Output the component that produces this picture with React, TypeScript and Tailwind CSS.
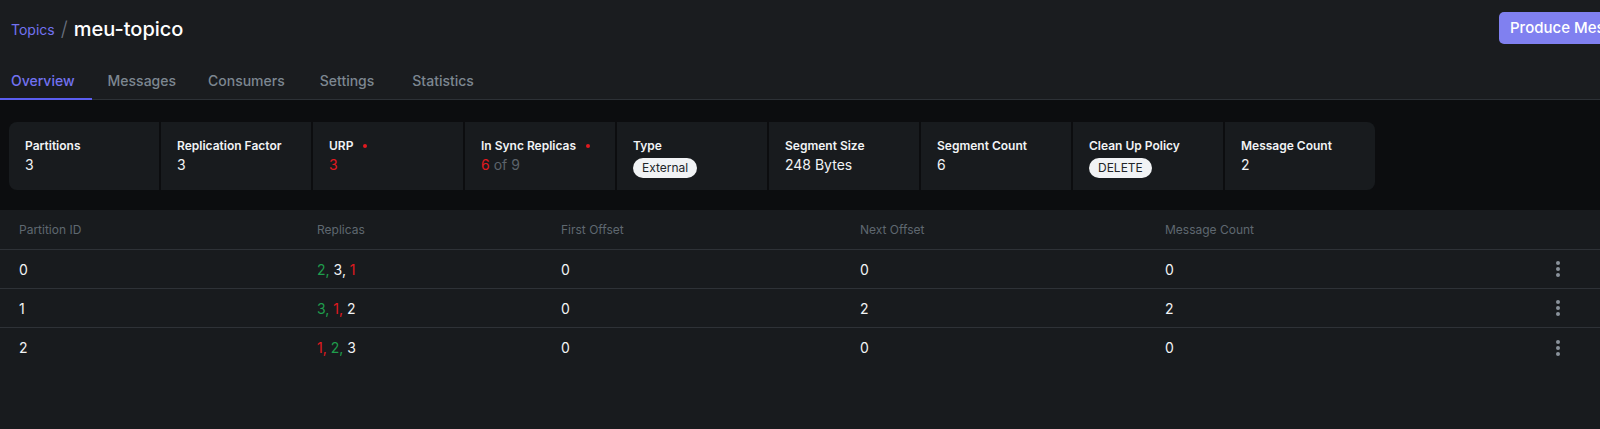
import { useState } from 'react';

type Replica = { id: number; tone: 'green' | 'red' | 'white' };

const stats = [
  { label: 'Partitions', value: '3' },
  { label: 'Replication Factor', value: '3' },
  { label: 'URP', value: '3', alert: true, red: true },
  { label: 'In Sync Replicas', value: 'isr', alert: true },
  { label: 'Type', badge: 'External' },
  { label: 'Segment Size', value: '248 Bytes' },
  { label: 'Segment Count', value: '6' },
  { label: 'Clean Up Policy', badge: 'DELETE' },
  { label: 'Message Count', value: '2' },
];

const rows: { id: string; replicas: Replica[]; first: string; next: string; count: string }[] = [
  {
    id: '0',
    replicas: [
      { id: 2, tone: 'green' },
      { id: 3, tone: 'white' },
      { id: 1, tone: 'red' },
    ],
    first: '0',
    next: '0',
    count: '0',
  },
  {
    id: '1',
    replicas: [
      { id: 3, tone: 'green' },
      { id: 1, tone: 'red' },
      { id: 2, tone: 'white' },
    ],
    first: '0',
    next: '2',
    count: '2',
  },
  {
    id: '2',
    replicas: [
      { id: 1, tone: 'red' },
      { id: 2, tone: 'green' },
      { id: 3, tone: 'white' },
    ],
    first: '0',
    next: '0',
    count: '0',
  },
];

const tabs = ['Overview', 'Messages', 'Consumers', 'Settings', 'Statistics'];

const tabSpacing = ['pl-[11px] pr-[17px]', 'px-4', 'px-4', 'ml-[3px] px-4', 'ml-[6px] px-4'];

const toneClass = {
  green: 'text-[#1f9d4c]',
  red: 'text-[#e0191f]',
  white: 'text-[#f1f3f5]',
};

function Kebab() {
  return (
    <svg width="6" height="18" viewBox="0 0 6 18" className="text-[#8a929b]">
      <circle cx="3" cy="3" r="2" fill="currentColor" />
      <circle cx="3" cy="9" r="2" fill="currentColor" />
      <circle cx="3" cy="15" r="2" fill="currentColor" />
    </svg>
  );
}

export default function App() {
  const [tab, setTab] = useState(0);

  return (
    <div className="h-[429px] w-full overflow-hidden bg-[#181b1e] font-['Inter',sans-serif] text-[#f1f3f5]">
      <header className="bg-[#1a1c1f]">
        <div className="flex h-[56px] items-center pl-[11px]">
          <div className="flex flex-1 items-center pt-[2px]">
            <span className="text-[14px] text-[#7272f0]">Topics</span>
            <span className="mx-[6px] text-[20px] font-light text-[#6b7280]">/</span>
            <h1 className="text-[20px] font-medium text-white">meu-topico</h1>
          </div>
          <button
            type="button"
            className="-mr-[44px] h-8 w-[145px] shrink-0 whitespace-nowrap rounded-[5px] bg-[#8080f0] pl-[11px] text-left text-[15px] font-medium text-white"
          >
            Produce Message
          </button>
        </div>
        <nav className="flex h-[44px] items-end border-b border-[#2d3136]">
          {tabs.map((t, i) => (
            <button
              key={t}
              type="button"
              onClick={() => setTab(i)}
              className={`-mb-px flex h-[40px] items-center border-b-2 pt-[2px] text-[14px] font-medium ${tabSpacing[i]} ${
                tab === i ? 'border-[#5b5ef0] text-[#7272f0]' : 'border-transparent text-[#7d8791]'
              }`}
            >
              {t}
            </button>
          ))}
        </nav>
      </header>

      <section className="bg-[#0c0d0f] px-[9px] pb-[20px] pt-[22px]">
        <div className="flex w-fit gap-[2px] overflow-hidden rounded-[8px]">
          {stats.map((s) => (
            <div key={s.label} className="h-[68px] w-[150px] bg-[#181b1e] px-4 pt-[16px]">
              <div className="flex items-center text-[12px] font-semibold leading-4 text-[#f1f3f5]">
                {s.label}
                {s.alert && <span className="ml-[10px] h-[4px] w-[4px] rounded-full bg-[#e0191f]" />}
              </div>
              {s.badge ? (
                <span className="mt-[3px] inline-flex h-[20px] items-center rounded-full bg-[#f1f3f5] px-[9px] text-[12px] text-[#212529]">
                  {s.badge}
                </span>
              ) : s.value === 'isr' ? (
                <div className="mt-[1px] text-[14px] leading-5">
                  <span className="text-[#e0191f]">6</span>
                  <span className="text-[#5c636b]"> of 9</span>
                </div>
              ) : (
                <div className={`mt-[1px] text-[14px] leading-5 ${s.red ? 'text-[#e0191f]' : 'text-[#f1f3f5]'}`}>
                  {s.value}
                </div>
              )}
            </div>
          ))}
        </div>
      </section>

      <div className="bg-[#181b1e]">
        <div className="grid h-[40px] grid-cols-[298px_244px_299px_305px_1fr_24px] items-center border-b border-[#2e3237] pl-[19px] pr-[30px] text-[12px] text-[#5f6870]">
          <div>Partition ID</div>
          <div>Replicas</div>
          <div>First Offset</div>
          <div>Next Offset</div>
          <div>Message Count</div>
          <div />
        </div>
        {rows.map((r, i) => (
          <div
            key={r.id}
            className={`grid h-[39px] grid-cols-[298px_244px_299px_305px_1fr_24px] items-center pl-[19px] pr-[30px] text-[14px] ${
              i < rows.length - 1 ? 'border-b border-[#2e3237]' : ''
            }`}
          >
            <div>{r.id}</div>
            <div>
              {r.replicas.map((rep, j) => (
                <span key={rep.id} className={toneClass[rep.tone]}>
                  {rep.id}
                  {j < r.replicas.length - 1 ? ', ' : ''}
                </span>
              ))}
            </div>
            <div>{r.first}</div>
            <div>{r.next}</div>
            <div>{r.count}</div>
            <div className="flex justify-center">
              <Kebab />
            </div>
          </div>
        ))}
      </div>
    </div>
  );
}
